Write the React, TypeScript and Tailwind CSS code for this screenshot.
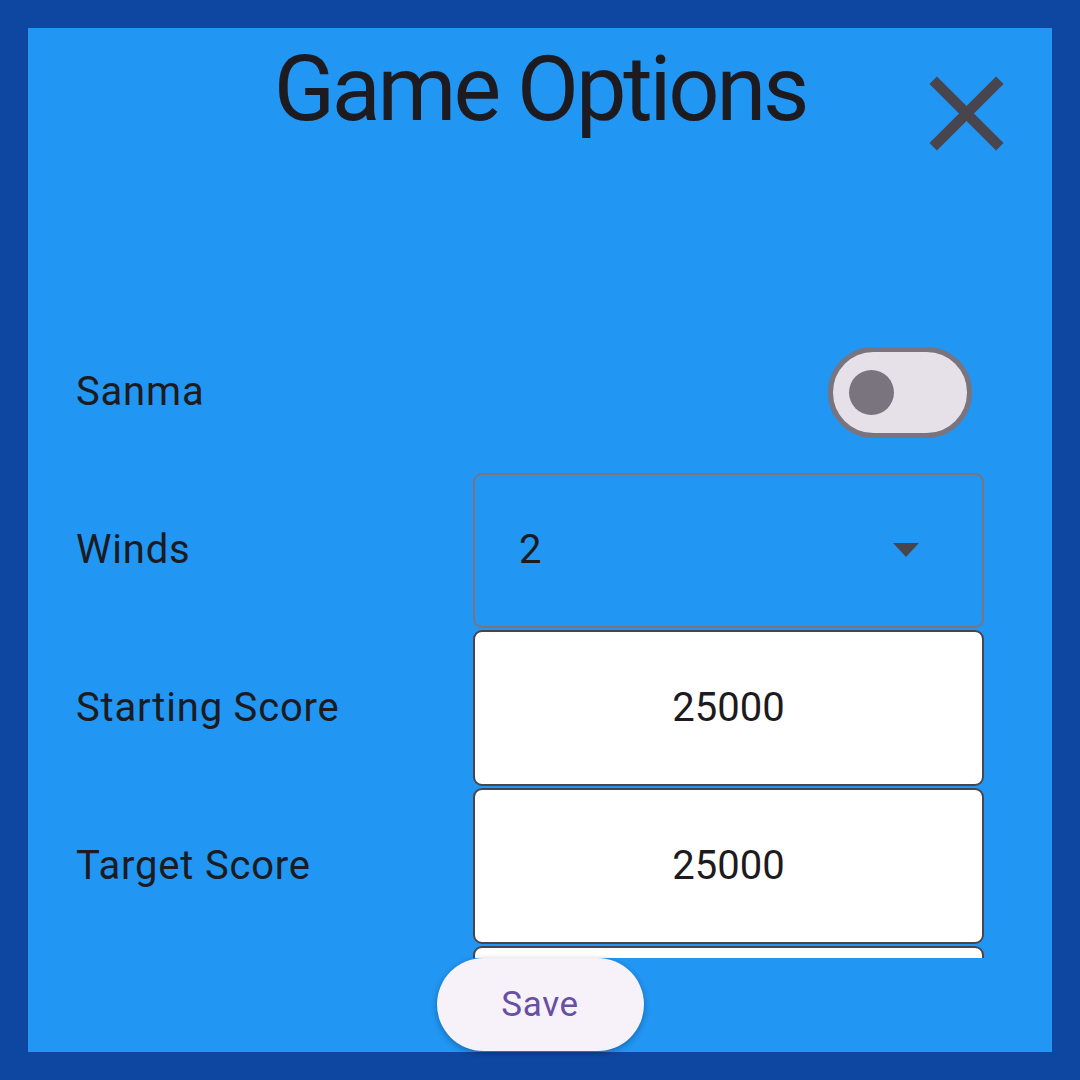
import React from "react";

const font = { fontFamily: "Roboto, 'Noto Sans', sans-serif" };

function CloseIcon() {
  return (
    <svg width="127" height="127" viewBox="0 0 24 24" fill="#49454F" aria-hidden="true">
      <path d="M19 6.41 17.59 5 12 10.59 6.41 5 5 6.41 10.59 12 5 17.59 6.41 19 12 13.41 17.59 19 19 17.59 13.41 12z" />
    </svg>
  );
}

function Toggle() {
  return (
    <div className="mr-[12px] flex h-[91px] w-[144px] items-center rounded-full border-[5px] border-[#79747E] bg-[#E6E0E9] pl-[16px]">
      <div className="h-[45px] w-[45px] rounded-full bg-[#79747E]" />
    </div>
  );
}

function Dropdown({ value }: { value: string }) {
  return (
    <div className="flex h-[155px] w-[511px] items-center justify-between rounded-[9px] border-[2px] border-[#79747E] pl-[44px] pr-[63px]">
      <span className="text-[40px] leading-none text-[#1D1B20]">{value}</span>
      <svg width="26" height="14" viewBox="0 0 26 14" aria-hidden="true">
        <path d="M0 0h26L13 14z" fill="#49454F" />
      </svg>
    </div>
  );
}

function NumberField({ value }: { value?: string }) {
  return (
    <div className="flex h-[156px] w-[511px] items-center justify-center rounded-[9px] border-[2.5px] border-[#49454F] bg-white">
      {value && <span className="text-[40px] leading-none text-[#1D1B20]">{value}</span>}
    </div>
  );
}

function Row({ label, children }: { label: string; children?: React.ReactNode }) {
  return (
    <div className="flex h-[158px] shrink-0 items-center justify-between">
      <span className="text-[40px] leading-none tracking-[0.02em] text-[#1D1B20]">{label}</span>
      {children}
    </div>
  );
}

export default function App() {
  return (
    <div className="h-[1080px] w-[1080px] bg-[#0D47A1] p-[28px]" style={font}>
      <div className="flex h-full w-full flex-col bg-[#2196F3]">
        <header className="grid h-[285px] shrink-0 grid-cols-[1fr_auto_1fr] items-start">
          <div />
          <h1 className="pt-[17px] text-[90px] font-normal leading-none tracking-[-0.035em] text-[#1D1B20]">
            Game Options
          </h1>
          <div className="flex justify-end pr-[22px] pt-[22px]">
            <CloseIcon />
          </div>
        </header>

        <div className="flex h-[645px] shrink-0 flex-col overflow-hidden pl-[48px] pr-[68px]">
          <Row label="Sanma">
            <Toggle />
          </Row>
          <Row label="Winds">
            <Dropdown value="2" />
          </Row>
          <Row label="Starting Score">
            <NumberField value="25000" />
          </Row>
          <Row label="Target Score">
            <NumberField value="25000" />
          </Row>
          <Row label="">
            <NumberField />
          </Row>
        </div>

        <div className="flex flex-1 items-start justify-center">
          <button className="h-[93px] w-[207px] rounded-full bg-[#F7F2FA] text-[35px] leading-none tracking-[0.02em] text-[#6750A4] shadow-[0_2px_6px_rgba(0,0,0,0.3)]">
            Save
          </button>
        </div>
      </div>
    </div>
  );
}
